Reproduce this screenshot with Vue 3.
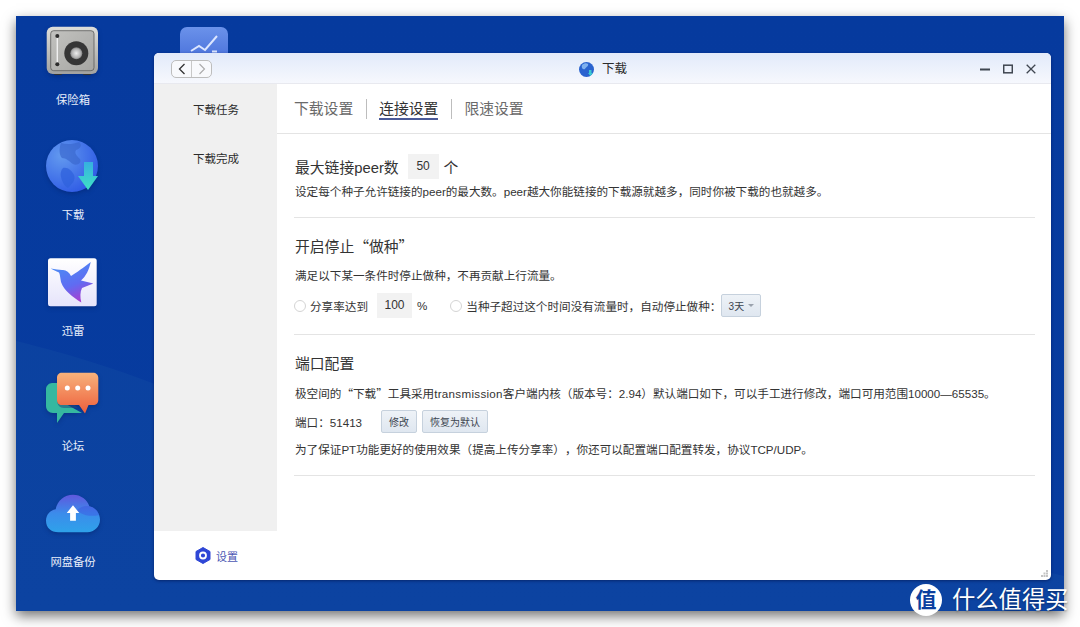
<template>
  <div class="page">
    <div class="desktop">
      <div class="curve"></div>

      <div class="icons">
        <div class="app">
          <svg class="app-icon" viewBox="0 0 54 54">
            <defs>
              <linearGradient id="safeBody" x1="0" y1="0" x2="0" y2="1">
                <stop offset="0" stop-color="#dedeDA" />
                <stop offset="1" stop-color="#a2a2a0" />
              </linearGradient>
              <linearGradient id="safeFace" x1="0" y1="0" x2="1" y2="1">
                <stop offset="0" stop-color="#c2c2bf" />
                <stop offset="1" stop-color="#a6a6a3" />
              </linearGradient>
              <radialGradient id="safeDial">
                <stop offset="0" stop-color="#eeeeee" />
                <stop offset="0.75" stop-color="#b0b0b0" />
                <stop offset="1" stop-color="#808080" />
              </radialGradient>
            </defs>
            <rect x="8" y="48" width="8" height="3" rx="1" fill="#333" />
            <rect x="37" y="48" width="8" height="3" rx="1" fill="#333" />
            <rect x="0.700" y="2.700" width="51.300" height="47.300" rx="6" fill="url(#safeBody)" />
            <rect x="4.700" y="6.700" width="43.300" height="40" rx="3" fill="url(#safeFace)" stroke="#5c5c5a" stroke-width="0.800" />
            <path d="M11.300 12v28" stroke="#f0f0f0" stroke-width="1.400" />
            <circle cx="11.300" cy="12" r="2" fill="#2c2c2c" />
            <circle cx="11.300" cy="40.300" r="2" fill="#2c2c2c" />
            <circle cx="30.300" cy="29.300" r="12" fill="#363636" />
            <circle cx="30.300" cy="29.300" r="6" fill="url(#safeDial)" />
          </svg>
          <span class="app-name">保险箱</span>
        </div>

        <div class="app">
          <svg class="app-icon" viewBox="0 0 54 54">
            <defs>
              <radialGradient id="globeFill" cx="0.3" cy="0.3" r="0.85">
                <stop offset="0" stop-color="#639aef" />
                <stop offset="1" stop-color="#2a55e4" />
              </radialGradient>
              <linearGradient id="arrowFill" x1="0" y1="0" x2="0" y2="1">
                <stop offset="0" stop-color="#36afe0" />
                <stop offset="1" stop-color="#3fe2c4" />
              </linearGradient>
            </defs>
            <circle cx="26" cy="27" r="26" fill="url(#globeFill)" />
            <path d="M15 4c6 2 13 1 18-1 4 3 1 7-3 8-2 3 1 6 4 9 2 4-3 7-7 5-4-3-7-6-11-6-3-3-3-10-1-15z" fill="#3a68cf" opacity="0.7" />
            <path d="M17 29c5-1 9 3 11 7 2 5-2 9-6 13-4-2-6-7-7-11-1-3 0-7 2-9z" fill="#2f62dc" opacity="0.75" />
            <path d="M38 23h9v14h5L42 51 32 37h6z" fill="url(#arrowFill)" />
          </svg>
          <span class="app-name">下载</span>
        </div>

        <div class="app">
          <svg class="app-icon" viewBox="0 0 54 54">
            <defs>
              <linearGradient id="birdTile" x1="0" y1="0" x2="0" y2="1">
                <stop offset="0" stop-color="#ffffff" />
                <stop offset="1" stop-color="#e6e4fb" />
              </linearGradient>
              <linearGradient id="birdFill" x1="0.2" y1="0" x2="0.6" y2="1">
                <stop offset="0" stop-color="#4a8ff5" />
                <stop offset="0.6" stop-color="#5f6cf2" />
                <stop offset="1" stop-color="#a93fd0" />
              </linearGradient>
            </defs>
            <rect x="2" y="3.200" width="48.700" height="48" rx="2.500" fill="url(#birdTile)" />
            <path d="M4.700 13.500C9 14 13 15 16 15c4-.500 7 2 9 6 5-3 13-9 19.700-14.100C43 15 40 21 35 25.500l12.300 3L36 33c-2 4-2 9-.7 14.500C27 42 18 36 15 27c-1-5-1-8-2-9.500-3-1.500-6-2.500-8.300-4z" fill="url(#birdFill)" />
          </svg>
          <span class="app-name">迅雷</span>
        </div>

        <div class="app">
          <svg class="app-icon" viewBox="0 0 54 54">
            <defs>
              <linearGradient id="chatFill" x1="0" y1="0" x2="0" y2="1">
                <stop offset="0" stop-color="#f7b27b" />
                <stop offset="1" stop-color="#ee5f3c" />
              </linearGradient>
            </defs>
            <path d="M6 13h12v20l18 10H18l-7 10v-10H7c-4 0-7-3-7-7V19c0-3 3-6 6-6z" fill="#35b8a0" />
            <path d="M11 30c0 5 3 8 7 8h14l-4-4H16z" fill="#1f4a7d" opacity="0.55" />
            <path d="M16 2.700h31c3 0 5.300 2 5.300 5V30c0 3-2 5-5.300 5h-4.500L39 43.500 33 35H16c-3 0-5-2-5-5V7.700c0-3 2-5 5-5z" fill="url(#chatFill)" />
            <circle cx="21.300" cy="18" r="2.500" fill="#fff" />
            <circle cx="31.700" cy="18" r="2.500" fill="#fff" />
            <circle cx="42" cy="18" r="2.500" fill="#fff" />
          </svg>
          <span class="app-name">论坛</span>
        </div>

        <div class="app">
          <svg class="app-icon" viewBox="0 0 56 54">
            <defs>
              <linearGradient id="cloudFill" x1="0" y1="0" x2="0" y2="1">
                <stop offset="0" stop-color="#5f58de" />
                <stop offset="0.5" stop-color="#3b8ceb" />
                <stop offset="1" stop-color="#2ea2ea" />
              </linearGradient>
            </defs>
            <path d="M13 47C5 47 0 42 0 35c0-6 4-11 10-12C12 14 19 8 28 8c8 0 15 5 17 12 6 1 11 7 11 14 0 7-6 13-13 13z" fill="url(#cloudFill)" />
            <path d="M32 24c3-3 8-5 13-4 5 1 9 4 10 9-8 2-18 1-23-5z" fill="#3d50e0" opacity="0.4" />
            <path d="M28 19 34.500 27H31v8h-6v-8h-3.500z" fill="#fff" />
          </svg>
          <span class="app-name">网盘备份</span>
        </div>
      </div>

      <svg class="chart-app" viewBox="0 0 48 48">
        <defs>
          <linearGradient id="chartFill" x1="0" y1="0" x2="0" y2="1">
            <stop offset="0" stop-color="#6b92ea" />
            <stop offset="1" stop-color="#3a62d4" />
          </linearGradient>
        </defs>
        <rect width="48" height="48" rx="7" fill="url(#chartFill)" />
        <path d="M11 24l8-5 6 4 12-14M32 24.500h5" fill="none" stroke="#dce6ff" stroke-width="2" />
      </svg>

      <section class="window">
        <header class="titlebar">
          <div class="nav-btns">
            <span class="nav-btn">
              <svg width="10" height="12" viewBox="0 0 10 12"><path d="M7.500 1 2.500 6l5 5" fill="none" stroke="#333" stroke-width="1.300" /></svg>
            </span>
            <span class="nav-btn">
              <svg width="10" height="12" viewBox="0 0 10 12"><path d="M2.500 1l5 5-5 5" fill="none" stroke="#aaa" stroke-width="1.100" /></svg>
            </span>
          </div>
          <div class="title">
            <svg width="15" height="15" viewBox="0 0 15 15">
              <circle cx="7.500" cy="7.500" r="7.500" fill="#2a63cf" />
              <path d="M3 3c2-2 5-2 6-1 1 2-2 3-3 5-2 1-4-1-3-4z" fill="#7fb0ee" />
              <path d="M10 8h2.500v3H14l-2.700 3L9 11h1z" fill="#3cc8d0" />
            </svg>
            <span>下载</span>
          </div>
          <div class="win-ctrls">
            <svg width="10" height="10" viewBox="0 0 10 10"><path d="M0 5.500h10" stroke="#3f4650" stroke-width="2" /></svg>
            <svg width="10" height="10" viewBox="0 0 10 10"><rect x="0.700" y="1.200" width="8.600" height="7.600" fill="none" stroke="#3f4650" stroke-width="1.500" /></svg>
            <svg width="10" height="10" viewBox="0 0 10 10"><path d="M.7.700l8.600 8.600M9.300.700.7 9.300" stroke="#3f4650" stroke-width="1.300" /></svg>
          </div>
        </header>

        <div class="win-body">
          <aside class="sidebar">
            <nav class="side-nav">
              <a v-for="item in sideItems" :key="item" class="side-item">{{ item }}</a>
            </nav>
            <div class="side-foot">
              <svg width="16" height="17" viewBox="0 0 16 17">
                <path d="M8 .500 15 4.500v8L8 16.500 1 12.500v-8z" fill="#2f47d6" stroke="#2f47d6" stroke-linejoin="round" />
                <circle cx="8" cy="8.500" r="3" fill="none" stroke="#fff" stroke-width="1.800" />
              </svg>
              <span>设置</span>
            </div>
          </aside>

          <main class="main">
            <div class="tabs">
              <span
                v-for="tab in tabs"
                :key="tab"
                class="tab"
                :class="{ active: tab === activeTab }"
              >{{ tab }}</span>
            </div>

            <div class="content">
              <section class="block block-peer">
                <div class="heading">
                  <span>最大链接peer数</span>
                  <span class="num-box big">50</span>
                  <span>个</span>
                </div>
                <p class="line first">设定每个种子允许链接的peer的最大数。peer越大你能链接的下载源就越多，同时你被下载的也就越多。</p>
              </section>

              <section class="block block-seed">
                <div class="heading"><span>开启停止<span class="cjk">“做种”</span></span></div>
                <p class="line">满足以下某一条件时停止做种，不再贡献上行流量。</p>
                <div class="opts">
                  <span class="radio"></span>
                  <span class="opt-text">分享率达到</span>
                  <span class="num-box ratio">100</span>
                  <span class="percent">%</span>
                  <span class="radio second"></span>
                  <span class="opt-text">当种子超过这个时间没有流量时，自动停止做种：</span>
                  <span class="btn select">3天<i class="caret"></i></span>
                </div>
              </section>

              <section class="block block-port">
                <div class="heading">端口配置</div>
                <p class="line">极空间的<span class="cjk">“下载”</span>工具采用<span class="wide">transmission</span>客户端内核（版本号：2.94）默认端口如下，可以手工进行修改，端口可用范围10000—65535。</p>
                <div class="port-row">
                  <span class="port">端口：51413</span>
                  <span class="btn">修改</span>
                  <span class="btn">恢复为默认</span>
                </div>
                <p class="line">为了保证PT功能更好的使用效果（提高上传分享率），你还可以配置端口配置转发，协议TCP/UDP。</p>
              </section>
            </div>

            <svg class="grip" width="7" height="7" viewBox="0 0 7 7">
              <path d="M5 0h2v2H5zM2.500 2.500h2v2h-2zM5 2.500h2v2H5zM0 5h2v2H0zM2.500 5h2v2h-2zM5 5h2v2H5z" fill="#c4c4c4" />
            </svg>
          </main>
        </div>
      </section>
    </div>

    <div class="watermark">
      <span class="wm-badge">值</span>
      <span class="wm-text">什么值得买</span>
    </div>
  </div>
</template>

<script setup>
import { ref } from 'vue'

const sideItems = ['下载任务', '下载完成']
const tabs = ['下载设置', '连接设置', '限速设置']
const activeTab = ref('连接设置')
</script>

<style>
html,
body {
  margin: 0;
  background: #fff;
}
</style>

<style scoped>
.page {
  position: relative;
  width: 1080px;
  height: 627px;
  overflow: hidden;
  padding: 16px;
  box-sizing: border-box;
  background: #fff;
  font-family: "Liberation Sans", "Noto Sans CJK SC", sans-serif;
  text-spacing-trim: space-all;
  color: #333;
}

.desktop {
  position: relative;
  height: 595px;
  background: linear-gradient(180deg, #063a9e 0%, #073c9f 100%);
  box-shadow: 0 5px 12px rgba(0, 0, 0, 0.55);
}

/* lighter sweep of the wallpaper, lower left */
.curve {
  position: absolute;
  inset: 0;
  background: linear-gradient(180deg, #0a409f, #0c43a1);
  clip-path: path('M0 325 C60 340 110 355 180 385 C400 480 800 500 1048 560 L1048 595 L0 595 Z');
}

.icons {
  position: absolute;
  left: 30px;
  top: 8px;
  width: 54px;
  display: flex;
  flex-direction: column;
}

.app {
  height: 115.4px;
  display: flex;
  flex-direction: column;
  align-items: center;
}

.app-icon {
  width: 54px;
  height: 54px;
  flex: none;
  display: block;
  filter: drop-shadow(0 2px 2px rgba(0, 20, 80, 0.3));
}

.app-name {
  margin-top: 14px;
  font-size: 11.3px;
  line-height: 16px;
  color: #e8eefa;
  white-space: nowrap;
}

.chart-app {
  position: absolute;
  left: 164px;
  top: 11px;
  width: 48px;
  height: 48px;
}

.window {
  position: absolute;
  left: 138px;
  top: 37px;
  width: 897px;
  height: 527px;
  display: flex;
  flex-direction: column;
  overflow: hidden;
  border-radius: 5px;
  background: #fff;
  box-shadow: 0 1px 3px rgba(0, 10, 60, 0.5);
}

.titlebar {
  flex: none;
  height: 31px;
  box-sizing: border-box;
  display: flex;
  align-items: center;
  justify-content: space-between;
  padding: 1px 15px 0 17px;
  position: relative;
  background: linear-gradient(180deg, #e2eafa 0%, #f6f8fd 100%);
  border-bottom: 1px solid #e8e9ef;
}

.nav-btns {
  display: flex;
  width: 41px;
  height: 18px;
  box-sizing: border-box;
  border: 1px solid #bdbdbd;
  border-radius: 5px;
  background: #f8f9fc;
}

.nav-btn {
  flex: 1;
  display: flex;
  align-items: center;
  justify-content: center;
}

.nav-btn + .nav-btn {
  border-left: 1px solid #c8c8c8;
}

.title {
  position: absolute;
  left: 425px;
  top: 8px;
  display: flex;
  align-items: center;
  gap: 8px;
  font-size: 12.5px;
  line-height: 16px;
  color: #2b2b2b;
}

.win-ctrls {
  display: flex;
  gap: 13px;
  align-items: center;
}

.win-body {
  flex: 1;
  min-height: 0;
  display: flex;
}

.sidebar {
  flex: none;
  width: 123px;
  display: flex;
  flex-direction: column;
}

.side-nav {
  flex: 1;
  background: #f0f0f0;
  display: flex;
  flex-direction: column;
}

.side-item {
  height: 49px;
  padding-left: 39px;
  font-size: 11.5px;
  line-height: 53px;
  color: #2b2b2b;
}

.side-foot {
  flex: none;
  height: 49px;
  display: flex;
  align-items: center;
  gap: 5px;
  padding-left: 41px;
  font-size: 11px;
  color: #4c57b4;
}

.main {
  position: relative;
  flex: 1;
  min-width: 0;
}

.tabs {
  height: 50px;
  box-sizing: border-box;
  padding-left: 17px;
  display: flex;
  align-items: center;
  border-bottom: 1px solid #e4e4e4;
}

.tab {
  position: relative;
  font-size: 14.8px;
  line-height: 20px;
  color: #6a6a6a;
  margin-right: 26px;
}

.tab.active {
  color: #333;
}

.tab.active::after {
  content: '';
  position: absolute;
  left: 0;
  right: 0;
  bottom: -1px;
  height: 2px;
  background: #4a5a98;
}

.tab + .tab::before {
  content: '';
  position: absolute;
  left: -13px;
  top: 0;
  width: 1px;
  height: 20px;
  background: #bdbdbd;
}

.content {
  padding: 0 16px 0 17px;
}

.block {
  border-bottom: 1px solid #e4e4e4;
  box-sizing: border-box;
}

.block-peer {
  height: 84px;
  padding-top: 20px;
}

.block-seed {
  height: 117px;
  padding-top: 15px;
}

.block-port {
  height: 141px;
  padding-top: 15px;
}

.heading {
  display: flex;
  align-items: center;
  height: 25px;
  font-size: 14.8px;
  color: #333;
  margin-left: 1px;
}

.cjk {
  font-family: "Noto Sans CJK SC", sans-serif;
}

.wide {
  letter-spacing: 0.3px;
}

.num-box {
  background: #f2f2f2;
  text-align: center;
  font-size: 12px;
  color: #333;
}

.num-box.big {
  width: 31px;
  height: 25px;
  line-height: 25px;
  margin: 0 5px 0 9px;
}

.line {
  margin: 10px 0 0 1px;
  font-size: 11.6px;
  line-height: 16px;
  color: #333;
  white-space: nowrap;
}

.line.first {
  margin-top: 5px;
}

.opts {
  display: flex;
  align-items: center;
  height: 25px;
  margin-top: 9px;
  font-size: 11.6px;
}

.radio {
  flex: none;
  width: 12px;
  height: 12px;
  box-sizing: border-box;
  border: 1px solid #d4d4d4;
  border-radius: 50%;
  background: #fff;
  margin-right: 4px;
}

.radio.second {
  margin-left: 23px;
}

.num-box.ratio {
  width: 35px;
  height: 25px;
  line-height: 25px;
  margin: 0 5px 0 9px;
}

.btn {
  display: inline-flex;
  align-items: center;
  justify-content: center;
  box-sizing: border-box;
  height: 23px;
  padding: 0 7px;
  font-size: 10px;
  color: #3c4550;
  background: linear-gradient(180deg, #eef2f7, #dfe7f0);
  border: 1px solid #c6d1dd;
  border-radius: 2px;
}

.select {
  width: 40px;
  padding: 0;
  gap: 4px;
}

.caret {
  width: 0;
  height: 0;
  border-left: 3px solid transparent;
  border-right: 3px solid transparent;
  border-top: 3px solid #9aa2ad;
}

.port-row {
  display: flex;
  align-items: center;
  gap: 5px;
  height: 23px;
  margin-top: 8px;
  margin-left: 1px;
}

.port {
  width: 81px;
  font-size: 11.6px;
}

.port-row + .line {
  margin-top: 9px;
}

.grip {
  position: absolute;
  right: 3px;
  bottom: 3px;
}

.watermark {
  position: absolute;
  left: 910px;
  top: 584px;
  display: flex;
  align-items: center;
  gap: 10px;
}

.wm-badge {
  width: 32px;
  height: 32px;
  border-radius: 50%;
  background: #fff;
  color: #0b3f9f;
  font-size: 21px;
  font-weight: 700;
  line-height: 31px;
  text-align: center;
}

.wm-text {
  font-size: 23.3px;
  line-height: 32px;
  color: #fff;
  white-space: nowrap;
  text-shadow: 0 1px 2px rgba(0, 0, 0, 0.35);
}
</style>
